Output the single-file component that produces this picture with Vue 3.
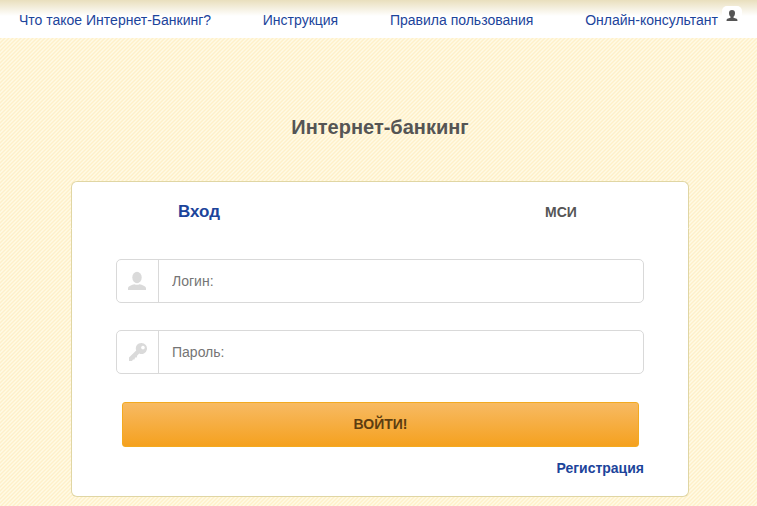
<script setup>
import { ref } from 'vue'

const links = ['Что такое Интернет-Банкинг?', 'Инструкция', 'Правила пользования']
const login = ref('')
const password = ref('')
</script>

<template>
  <div class="page">
    <nav class="topbar">
      <a v-for="link in links" :key="link" href="#">{{ link }}</a>
      <a href="#" class="consultant">Онлайн-консультант
        <span class="badge">
          <svg viewBox="0 0 12 12" width="12" height="12" aria-hidden="true">
            <path d="M6 0C4 0 3 1.200 3 3C3 4.500 3.500 6 4.500 6.700V7.800L1.300 8.700Q.5 9 .5 11H11.500Q11.500 9 10.700 8.700L7.500 7.800V6.700C8.500 6 9 4.500 9 3C9 1.200 8 0 6 0Z" fill="#555" />
          </svg>
        </span>
      </a>
    </nav>

    <main>
      <h1>Интернет-банкинг</h1>
      <section class="card">
        <div class="tabs">
          <button type="button" class="tab active">Вход</button>
          <button type="button" class="tab">МСИ</button>
        </div>
        <form class="form" @submit.prevent>
          <div class="field">
            <label for="login" class="icon">
              <svg viewBox="0 0 20 20" width="20" height="20" aria-hidden="true">
                <ellipse cx="9" cy="6.500" rx="4.700" ry="5.700" fill="#dadada" />
                <path d="M0 19V17.200C0 15.300 4 13.500 6.500 13.200Q9 14.300 11.500 13.200C14 13.500 18 15.300 18 17.200V19Z" fill="#dadada" />
              </svg>
            </label>
            <input id="login" v-model="login" type="text" placeholder="Логин:" aria-label="Логин" />
          </div>
          <div class="field">
            <label for="password" class="icon">
              <svg viewBox="0 0 20 20" width="20" height="20" aria-hidden="true">
                <path fill-rule="evenodd" d="M13.500 1A5.500 5.500 0 0 0 8.200 8.600L1 15.500V19H4L5 17.500H6.500L7 15.500H8.700L9.200 13.500L11.200 11.500A5.500 5.500 0 1 0 13.500 1ZM15 3.700A1.800 1.800 0 1 1 14.900 3.700Z" fill="#dadada" />
              </svg>
            </label>
            <input id="password" v-model="password" type="password" placeholder="Пароль:" aria-label="Пароль" />
          </div>
          <button type="submit" class="submit">ВОЙТИ!</button>
          <a href="#" class="register">Регистрация</a>
        </form>
      </section>
    </main>
  </div>
</template>

<style>
body {
  background: #fff4d6 linear-gradient(135deg, #fffae6 12.5%, #fff0c8 37.5%, #fffae6 62.5%, #fff0c8 87.5%, #fff5d7) 0 0 / 4px 4px;
}
</style>

<style scoped>
.page {
  font-family: "Liberation Sans", Arial, sans-serif;
  font-size: 14px;
  line-height: 16px;
  color: #555;
}
.topbar {
  display: flex;
  justify-content: space-between;
  height: 38px;
  padding: 0 15px 0 19px;
  box-sizing: border-box;
  align-items: center;
  white-space: nowrap;
  background: linear-gradient(#e9dfbd, #fff 16px);
}
a {
  color: #1c449b;
  text-decoration: none;
}
.topbar a {
  padding-top: 2px;
}
.consultant {
  display: flex;
  gap: 4px;
}
.badge {
  display: flex;
  align-items: center;
  justify-content: center;
  width: 20px;
  height: 20px;
  margin: -6px 0;
  border-radius: 5px;
  background: #fff;
}
main {
  padding: 77px 68px 9px 71px;
}
h1 {
  margin: 0 0 42px;
  font-size: 20px;
  line-height: 24px;
  text-align: center;
}
.card {
  font-weight: bold;
}
.tabs {
  display: flex;
  justify-content: space-between;
  align-items: baseline;
  height: 48px;
  box-sizing: border-box;
  padding-top: 20px;
  border: 1px solid #e0d6a4;
  border-bottom-color: #fff;
  border-radius: 6px 6px 0 0;
  background: #fff;
}
.tab {
  width: 254px;
  padding: 0;
  border: 0;
  background: none;
  font: bold 14px "Liberation Sans", Arial, sans-serif;
  color: #555;
}
.tab.active {
  font-size: 17px;
  color: #1c449b;
}
.form {
  display: flex;
  flex-direction: column;
  padding: 30px 44px 20px;
  border: 1px solid #e0d6a4;
  border-top: 0;
  border-radius: 0 0 6px 6px;
  background: #fff;
}
.field {
  display: flex;
  height: 44px;
  margin-bottom: 27px;
  box-sizing: border-box;
  border: 1px solid #d9d9d9;
  border-radius: 5px;
}
.icon {
  display: flex;
  align-items: center;
  justify-content: center;
  width: 41px;
  border-right: 1px solid #d9d9d9;
}
input {
  flex: 1;
  min-width: 0;
  padding: 0 13px;
  border: 0;
  outline: 0;
  background: none;
  font: 14px "Liberation Sans", Arial, sans-serif;
  color: #555;
}
input::placeholder {
  color: #757575;
}
.submit {
  height: 45px;
  margin: 1px 5px 13px 6px;
  padding: 0 0 2px;
  border: 1px solid #f3aa20;
  border-radius: 3px;
  background: linear-gradient(#f7ba63, #f5a11f);
  font: bold 14px "Liberation Sans", Arial, sans-serif;
  color: #5c3d10;
}
.register {
  align-self: flex-end;
}
</style>
